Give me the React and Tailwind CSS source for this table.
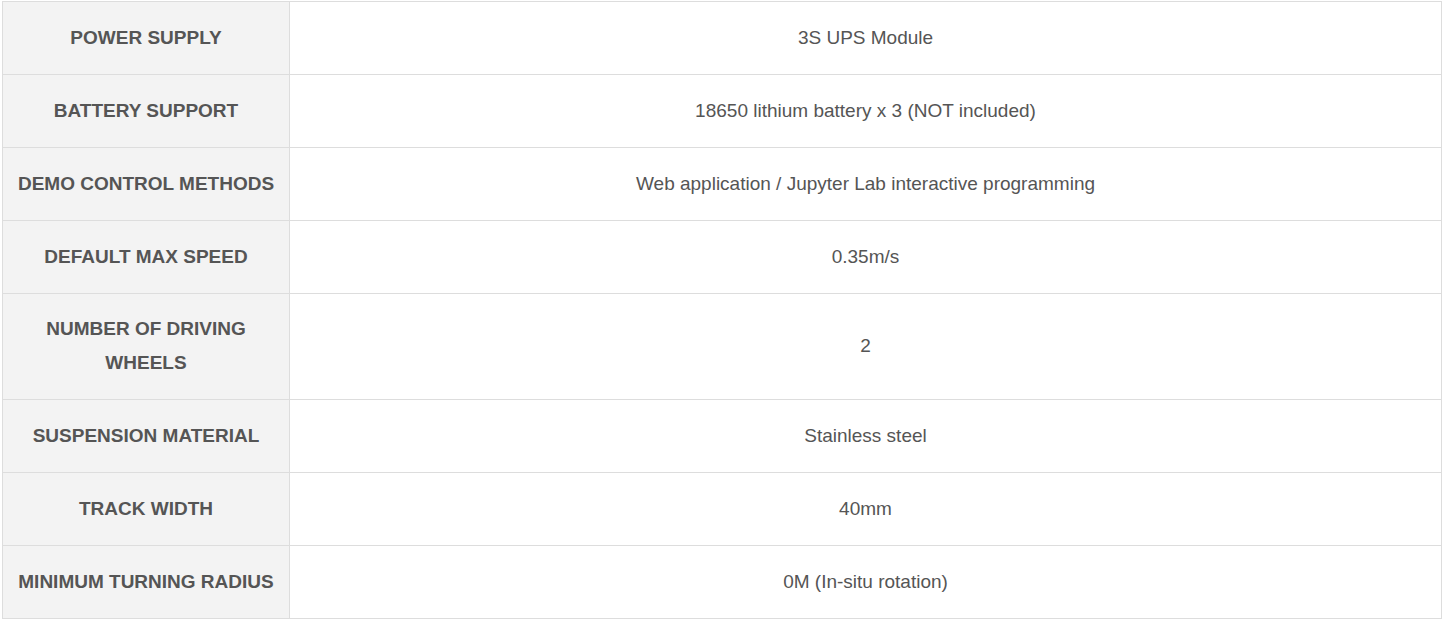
const specs = [
  ['POWER SUPPLY', '3S UPS Module'],
  ['BATTERY SUPPORT', '18650 lithium battery x 3 (NOT included)'],
  ['DEMO CONTROL METHODS', 'Web application / Jupyter Lab interactive programming'],
  ['DEFAULT MAX SPEED', '0.35m/s'],
  ['NUMBER OF DRIVING WHEELS', '2'],
  ['SUSPENSION MATERIAL', 'Stainless steel'],
  ['TRACK WIDTH', '40mm'],
  ['MINIMUM TURNING RADIUS', '0M (In-situ rotation)'],
];

export default function App() {
  return (
    <div className="min-h-screen bg-white pl-[2px] pt-[1px] font-['Liberation_Sans',Arial,sans-serif] text-[#555]">
      <table className="w-[1440px] table-fixed border-collapse text-[19px] leading-[34px]">
        <colgroup>
          <col className="w-[287px]" />
          <col />
        </colgroup>
        <tbody>
          {specs.map(([label, value]) => (
            <tr key={label}>
              <th className="border border-[#dddddd] bg-[#f3f3f3] px-[14px] py-[18.94px] text-center font-bold">
                {label}
              </th>
              <td className="border border-[#dddddd] px-[15px] py-[18.94px] text-center font-normal">
                {value}
              </td>
            </tr>
          ))}
        </tbody>
      </table>
    </div>
  );
}
